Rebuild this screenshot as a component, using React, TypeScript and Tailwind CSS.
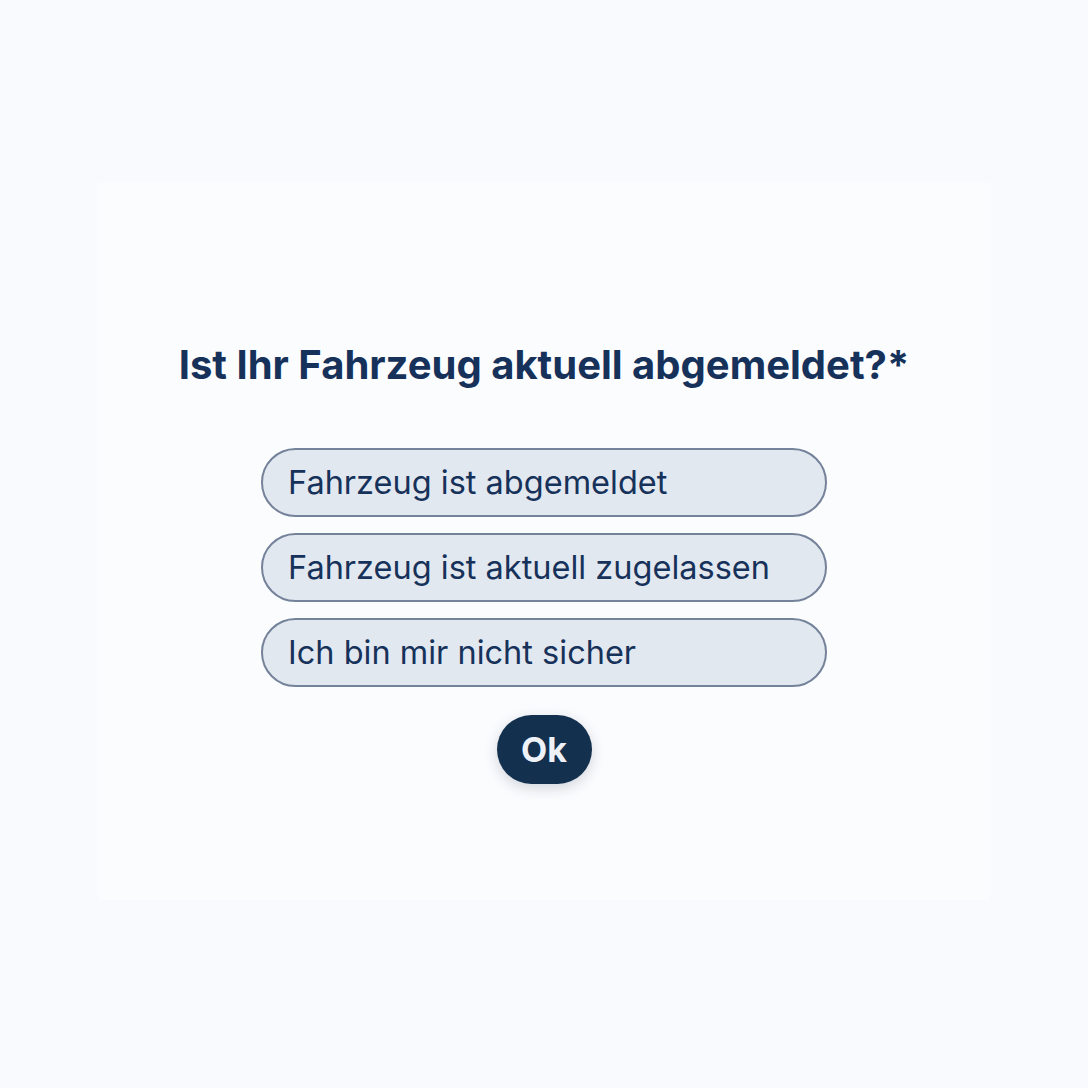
import { useState } from 'react'

const options = [
  'Fahrzeug ist abgemeldet',
  'Fahrzeug ist aktuell zugelassen',
  'Ich bin mir nicht sicher',
]

export default function App() {
  const [selected, setSelected] = useState<string | null>(null)

  return (
    <div className="min-h-[1088px] w-full bg-[#f8fafd] pt-[183px] font-['Inter',sans-serif]">
      <div className="mx-[98px] flex h-[717px] flex-col items-center bg-[#fbfcfe] pt-[162px]">
        <h2 className="text-[40px] font-bold leading-none text-[#17325a]">
          Ist Ihr Fahrzeug aktuell abgemeldet?*
        </h2>
        <div className="mt-[63px] flex w-[566px] flex-col gap-[16px]">
          {options.map((opt) => (
            <button
              key={opt}
              onClick={() => setSelected(opt)}
              className={
                selected === opt
                  ? 'h-[69px] rounded-full border-2 border-[#17325a] bg-[#cbd5e1] px-[25px] pt-[2px] text-left text-[32.5px] text-[#17325a]'
                  : 'h-[69px] rounded-full border-2 border-[#74829a] bg-[#e2e8f0] px-[25px] pt-[2px] text-left text-[32.5px] text-[#17325a]'
              }
            >
              {opt}
            </button>
          ))}
        </div>
        <button className="mt-[28px] h-[69px] w-[95px] rounded-full bg-[#14304f] text-[34px] font-bold text-[#eef2f8] shadow-[0_4px_14px_rgba(15,35,60,0.18)]">
          Ok
        </button>
      </div>
    </div>
  )
}
